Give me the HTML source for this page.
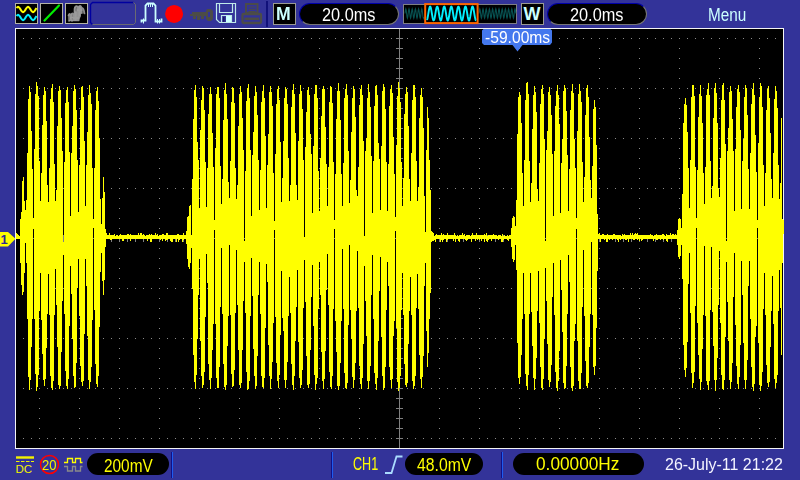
<!DOCTYPE html>
<html><head><meta charset="utf-8"><title>Oscilloscope</title>
<style>
html,body{margin:0;padding:0;}
body{width:800px;height:480px;overflow:hidden;background:#333399;font-family:"Liberation Sans",sans-serif;position:relative;}
.abs{position:absolute;}
.pill{position:absolute;background:#000;border-radius:11px;box-sizing:border-box;height:22px;}
.pill.top{border:1px solid;border-color:#0000a8 #777 #777 #0000a8;}
.txt{position:absolute;white-space:nowrap;line-height:1;transform-origin:0 0;}
.box{position:absolute;box-sizing:border-box;background:#000;border:1px solid #b8b8a8;}
</style></head><body>
<svg class="abs" style="left:0;top:0" width="800" height="480" viewBox="0 0 800 480">
 <!-- plot area -->
 <rect x="15.5" y="28.5" width="768" height="420" fill="#000" stroke="#f4f4f4" stroke-width="1"/>
 <g shape-rendering="crispEdges">
  <path d="M23 38h1M31 38h1M39 38h1M47 38h1M55 38h1M63 38h1M71 38h1M79 38h1M87 38h1M95 38h1M103 38h1M111 38h1M119 38h1M127 38h1M135 38h1M143 38h1M151 38h1M159 38h1M167 38h1M175 38h1M183 38h1M191 38h1M199 38h1M207 38h1M215 38h1M223 38h1M231 38h1M239 38h1M247 38h1M255 38h1M263 38h1M271 38h1M279 38h1M287 38h1M295 38h1M303 38h1M311 38h1M319 38h1M327 38h1M335 38h1M343 38h1M351 38h1M359 38h1M367 38h1M375 38h1M383 38h1M391 38h1M399 38h1M407 38h1M415 38h1M423 38h1M431 38h1M439 38h1M447 38h1M455 38h1M463 38h1M471 38h1M479 38h1M487 38h1M495 38h1M503 38h1M511 38h1M519 38h1M527 38h1M535 38h1M543 38h1M551 38h1M559 38h1M567 38h1M575 38h1M583 38h1M591 38h1M599 38h1M607 38h1M615 38h1M623 38h1M631 38h1M639 38h1M647 38h1M655 38h1M663 38h1M671 38h1M679 38h1M687 38h1M695 38h1M703 38h1M711 38h1M719 38h1M727 38h1M735 38h1M743 38h1M751 38h1M759 38h1M767 38h1M775 38h1M23 88h1M31 88h1M39 88h1M47 88h1M55 88h1M63 88h1M71 88h1M79 88h1M87 88h1M95 88h1M103 88h1M111 88h1M119 88h1M127 88h1M135 88h1M143 88h1M151 88h1M159 88h1M167 88h1M175 88h1M183 88h1M191 88h1M199 88h1M207 88h1M215 88h1M223 88h1M231 88h1M239 88h1M247 88h1M255 88h1M263 88h1M271 88h1M279 88h1M287 88h1M295 88h1M303 88h1M311 88h1M319 88h1M327 88h1M335 88h1M343 88h1M351 88h1M359 88h1M367 88h1M375 88h1M383 88h1M391 88h1M399 88h1M407 88h1M415 88h1M423 88h1M431 88h1M439 88h1M447 88h1M455 88h1M463 88h1M471 88h1M479 88h1M487 88h1M495 88h1M503 88h1M511 88h1M519 88h1M527 88h1M535 88h1M543 88h1M551 88h1M559 88h1M567 88h1M575 88h1M583 88h1M591 88h1M599 88h1M607 88h1M615 88h1M623 88h1M631 88h1M639 88h1M647 88h1M655 88h1M663 88h1M671 88h1M679 88h1M687 88h1M695 88h1M703 88h1M711 88h1M719 88h1M727 88h1M735 88h1M743 88h1M751 88h1M759 88h1M767 88h1M775 88h1M23 138h1M31 138h1M39 138h1M47 138h1M55 138h1M63 138h1M71 138h1M79 138h1M87 138h1M95 138h1M103 138h1M111 138h1M119 138h1M127 138h1M135 138h1M143 138h1M151 138h1M159 138h1M167 138h1M175 138h1M183 138h1M191 138h1M199 138h1M207 138h1M215 138h1M223 138h1M231 138h1M239 138h1M247 138h1M255 138h1M263 138h1M271 138h1M279 138h1M287 138h1M295 138h1M303 138h1M311 138h1M319 138h1M327 138h1M335 138h1M343 138h1M351 138h1M359 138h1M367 138h1M375 138h1M383 138h1M391 138h1M399 138h1M407 138h1M415 138h1M423 138h1M431 138h1M439 138h1M447 138h1M455 138h1M463 138h1M471 138h1M479 138h1M487 138h1M495 138h1M503 138h1M511 138h1M519 138h1M527 138h1M535 138h1M543 138h1M551 138h1M559 138h1M567 138h1M575 138h1M583 138h1M591 138h1M599 138h1M607 138h1M615 138h1M623 138h1M631 138h1M639 138h1M647 138h1M655 138h1M663 138h1M671 138h1M679 138h1M687 138h1M695 138h1M703 138h1M711 138h1M719 138h1M727 138h1M735 138h1M743 138h1M751 138h1M759 138h1M767 138h1M775 138h1M23 188h1M31 188h1M39 188h1M47 188h1M55 188h1M63 188h1M71 188h1M79 188h1M87 188h1M95 188h1M103 188h1M111 188h1M119 188h1M127 188h1M135 188h1M143 188h1M151 188h1M159 188h1M167 188h1M175 188h1M183 188h1M191 188h1M199 188h1M207 188h1M215 188h1M223 188h1M231 188h1M239 188h1M247 188h1M255 188h1M263 188h1M271 188h1M279 188h1M287 188h1M295 188h1M303 188h1M311 188h1M319 188h1M327 188h1M335 188h1M343 188h1M351 188h1M359 188h1M367 188h1M375 188h1M383 188h1M391 188h1M399 188h1M407 188h1M415 188h1M423 188h1M431 188h1M439 188h1M447 188h1M455 188h1M463 188h1M471 188h1M479 188h1M487 188h1M495 188h1M503 188h1M511 188h1M519 188h1M527 188h1M535 188h1M543 188h1M551 188h1M559 188h1M567 188h1M575 188h1M583 188h1M591 188h1M599 188h1M607 188h1M615 188h1M623 188h1M631 188h1M639 188h1M647 188h1M655 188h1M663 188h1M671 188h1M679 188h1M687 188h1M695 188h1M703 188h1M711 188h1M719 188h1M727 188h1M735 188h1M743 188h1M751 188h1M759 188h1M767 188h1M775 188h1M23 238h1M31 238h1M39 238h1M47 238h1M55 238h1M63 238h1M71 238h1M79 238h1M87 238h1M95 238h1M103 238h1M111 238h1M119 238h1M127 238h1M135 238h1M143 238h1M151 238h1M159 238h1M167 238h1M175 238h1M183 238h1M191 238h1M199 238h1M207 238h1M215 238h1M223 238h1M231 238h1M239 238h1M247 238h1M255 238h1M263 238h1M271 238h1M279 238h1M287 238h1M295 238h1M303 238h1M311 238h1M319 238h1M327 238h1M335 238h1M343 238h1M351 238h1M359 238h1M367 238h1M375 238h1M383 238h1M391 238h1M399 238h1M407 238h1M415 238h1M423 238h1M431 238h1M439 238h1M447 238h1M455 238h1M463 238h1M471 238h1M479 238h1M487 238h1M495 238h1M503 238h1M511 238h1M519 238h1M527 238h1M535 238h1M543 238h1M551 238h1M559 238h1M567 238h1M575 238h1M583 238h1M591 238h1M599 238h1M607 238h1M615 238h1M623 238h1M631 238h1M639 238h1M647 238h1M655 238h1M663 238h1M671 238h1M679 238h1M687 238h1M695 238h1M703 238h1M711 238h1M719 238h1M727 238h1M735 238h1M743 238h1M751 238h1M759 238h1M767 238h1M775 238h1M23 288h1M31 288h1M39 288h1M47 288h1M55 288h1M63 288h1M71 288h1M79 288h1M87 288h1M95 288h1M103 288h1M111 288h1M119 288h1M127 288h1M135 288h1M143 288h1M151 288h1M159 288h1M167 288h1M175 288h1M183 288h1M191 288h1M199 288h1M207 288h1M215 288h1M223 288h1M231 288h1M239 288h1M247 288h1M255 288h1M263 288h1M271 288h1M279 288h1M287 288h1M295 288h1M303 288h1M311 288h1M319 288h1M327 288h1M335 288h1M343 288h1M351 288h1M359 288h1M367 288h1M375 288h1M383 288h1M391 288h1M399 288h1M407 288h1M415 288h1M423 288h1M431 288h1M439 288h1M447 288h1M455 288h1M463 288h1M471 288h1M479 288h1M487 288h1M495 288h1M503 288h1M511 288h1M519 288h1M527 288h1M535 288h1M543 288h1M551 288h1M559 288h1M567 288h1M575 288h1M583 288h1M591 288h1M599 288h1M607 288h1M615 288h1M623 288h1M631 288h1M639 288h1M647 288h1M655 288h1M663 288h1M671 288h1M679 288h1M687 288h1M695 288h1M703 288h1M711 288h1M719 288h1M727 288h1M735 288h1M743 288h1M751 288h1M759 288h1M767 288h1M775 288h1M23 338h1M31 338h1M39 338h1M47 338h1M55 338h1M63 338h1M71 338h1M79 338h1M87 338h1M95 338h1M103 338h1M111 338h1M119 338h1M127 338h1M135 338h1M143 338h1M151 338h1M159 338h1M167 338h1M175 338h1M183 338h1M191 338h1M199 338h1M207 338h1M215 338h1M223 338h1M231 338h1M239 338h1M247 338h1M255 338h1M263 338h1M271 338h1M279 338h1M287 338h1M295 338h1M303 338h1M311 338h1M319 338h1M327 338h1M335 338h1M343 338h1M351 338h1M359 338h1M367 338h1M375 338h1M383 338h1M391 338h1M399 338h1M407 338h1M415 338h1M423 338h1M431 338h1M439 338h1M447 338h1M455 338h1M463 338h1M471 338h1M479 338h1M487 338h1M495 338h1M503 338h1M511 338h1M519 338h1M527 338h1M535 338h1M543 338h1M551 338h1M559 338h1M567 338h1M575 338h1M583 338h1M591 338h1M599 338h1M607 338h1M615 338h1M623 338h1M631 338h1M639 338h1M647 338h1M655 338h1M663 338h1M671 338h1M679 338h1M687 338h1M695 338h1M703 338h1M711 338h1M719 338h1M727 338h1M735 338h1M743 338h1M751 338h1M759 338h1M767 338h1M775 338h1M23 388h1M31 388h1M39 388h1M47 388h1M55 388h1M63 388h1M71 388h1M79 388h1M87 388h1M95 388h1M103 388h1M111 388h1M119 388h1M127 388h1M135 388h1M143 388h1M151 388h1M159 388h1M167 388h1M175 388h1M183 388h1M191 388h1M199 388h1M207 388h1M215 388h1M223 388h1M231 388h1M239 388h1M247 388h1M255 388h1M263 388h1M271 388h1M279 388h1M287 388h1M295 388h1M303 388h1M311 388h1M319 388h1M327 388h1M335 388h1M343 388h1M351 388h1M359 388h1M367 388h1M375 388h1M383 388h1M391 388h1M399 388h1M407 388h1M415 388h1M423 388h1M431 388h1M439 388h1M447 388h1M455 388h1M463 388h1M471 388h1M479 388h1M487 388h1M495 388h1M503 388h1M511 388h1M519 388h1M527 388h1M535 388h1M543 388h1M551 388h1M559 388h1M567 388h1M575 388h1M583 388h1M591 388h1M599 388h1M607 388h1M615 388h1M623 388h1M631 388h1M639 388h1M647 388h1M655 388h1M663 388h1M671 388h1M679 388h1M687 388h1M695 388h1M703 388h1M711 388h1M719 388h1M727 388h1M735 388h1M743 388h1M751 388h1M759 388h1M767 388h1M775 388h1M23 438h1M31 438h1M39 438h1M47 438h1M55 438h1M63 438h1M71 438h1M79 438h1M87 438h1M95 438h1M103 438h1M111 438h1M119 438h1M127 438h1M135 438h1M143 438h1M151 438h1M159 438h1M167 438h1M175 438h1M183 438h1M191 438h1M199 438h1M207 438h1M215 438h1M223 438h1M231 438h1M239 438h1M247 438h1M255 438h1M263 438h1M271 438h1M279 438h1M287 438h1M295 438h1M303 438h1M311 438h1M319 438h1M327 438h1M335 438h1M343 438h1M351 438h1M359 438h1M367 438h1M375 438h1M383 438h1M391 438h1M399 438h1M407 438h1M415 438h1M423 438h1M431 438h1M439 438h1M447 438h1M455 438h1M463 438h1M471 438h1M479 438h1M487 438h1M495 438h1M503 438h1M511 438h1M519 438h1M527 438h1M535 438h1M543 438h1M551 438h1M559 438h1M567 438h1M575 438h1M583 438h1M591 438h1M599 438h1M607 438h1M615 438h1M623 438h1M631 438h1M639 438h1M647 438h1M655 438h1M663 438h1M671 438h1M679 438h1M687 438h1M695 438h1M703 438h1M711 438h1M719 438h1M727 438h1M735 438h1M743 438h1M751 438h1M759 438h1M767 438h1M775 438h1M39 48h1M39 58h1M39 68h1M39 78h1M39 98h1M39 108h1M39 118h1M39 128h1M39 148h1M39 158h1M39 168h1M39 178h1M39 198h1M39 208h1M39 218h1M39 228h1M39 248h1M39 258h1M39 268h1M39 278h1M39 298h1M39 308h1M39 318h1M39 328h1M39 348h1M39 358h1M39 368h1M39 378h1M39 398h1M39 408h1M39 418h1M39 428h1M79 48h1M79 58h1M79 68h1M79 78h1M79 98h1M79 108h1M79 118h1M79 128h1M79 148h1M79 158h1M79 168h1M79 178h1M79 198h1M79 208h1M79 218h1M79 228h1M79 248h1M79 258h1M79 268h1M79 278h1M79 298h1M79 308h1M79 318h1M79 328h1M79 348h1M79 358h1M79 368h1M79 378h1M79 398h1M79 408h1M79 418h1M79 428h1M119 48h1M119 58h1M119 68h1M119 78h1M119 98h1M119 108h1M119 118h1M119 128h1M119 148h1M119 158h1M119 168h1M119 178h1M119 198h1M119 208h1M119 218h1M119 228h1M119 248h1M119 258h1M119 268h1M119 278h1M119 298h1M119 308h1M119 318h1M119 328h1M119 348h1M119 358h1M119 368h1M119 378h1M119 398h1M119 408h1M119 418h1M119 428h1M159 48h1M159 58h1M159 68h1M159 78h1M159 98h1M159 108h1M159 118h1M159 128h1M159 148h1M159 158h1M159 168h1M159 178h1M159 198h1M159 208h1M159 218h1M159 228h1M159 248h1M159 258h1M159 268h1M159 278h1M159 298h1M159 308h1M159 318h1M159 328h1M159 348h1M159 358h1M159 368h1M159 378h1M159 398h1M159 408h1M159 418h1M159 428h1M199 48h1M199 58h1M199 68h1M199 78h1M199 98h1M199 108h1M199 118h1M199 128h1M199 148h1M199 158h1M199 168h1M199 178h1M199 198h1M199 208h1M199 218h1M199 228h1M199 248h1M199 258h1M199 268h1M199 278h1M199 298h1M199 308h1M199 318h1M199 328h1M199 348h1M199 358h1M199 368h1M199 378h1M199 398h1M199 408h1M199 418h1M199 428h1M239 48h1M239 58h1M239 68h1M239 78h1M239 98h1M239 108h1M239 118h1M239 128h1M239 148h1M239 158h1M239 168h1M239 178h1M239 198h1M239 208h1M239 218h1M239 228h1M239 248h1M239 258h1M239 268h1M239 278h1M239 298h1M239 308h1M239 318h1M239 328h1M239 348h1M239 358h1M239 368h1M239 378h1M239 398h1M239 408h1M239 418h1M239 428h1M279 48h1M279 58h1M279 68h1M279 78h1M279 98h1M279 108h1M279 118h1M279 128h1M279 148h1M279 158h1M279 168h1M279 178h1M279 198h1M279 208h1M279 218h1M279 228h1M279 248h1M279 258h1M279 268h1M279 278h1M279 298h1M279 308h1M279 318h1M279 328h1M279 348h1M279 358h1M279 368h1M279 378h1M279 398h1M279 408h1M279 418h1M279 428h1M319 48h1M319 58h1M319 68h1M319 78h1M319 98h1M319 108h1M319 118h1M319 128h1M319 148h1M319 158h1M319 168h1M319 178h1M319 198h1M319 208h1M319 218h1M319 228h1M319 248h1M319 258h1M319 268h1M319 278h1M319 298h1M319 308h1M319 318h1M319 328h1M319 348h1M319 358h1M319 368h1M319 378h1M319 398h1M319 408h1M319 418h1M319 428h1M359 48h1M359 58h1M359 68h1M359 78h1M359 98h1M359 108h1M359 118h1M359 128h1M359 148h1M359 158h1M359 168h1M359 178h1M359 198h1M359 208h1M359 218h1M359 228h1M359 248h1M359 258h1M359 268h1M359 278h1M359 298h1M359 308h1M359 318h1M359 328h1M359 348h1M359 358h1M359 368h1M359 378h1M359 398h1M359 408h1M359 418h1M359 428h1M399 48h1M399 58h1M399 68h1M399 78h1M399 98h1M399 108h1M399 118h1M399 128h1M399 148h1M399 158h1M399 168h1M399 178h1M399 198h1M399 208h1M399 218h1M399 228h1M399 248h1M399 258h1M399 268h1M399 278h1M399 298h1M399 308h1M399 318h1M399 328h1M399 348h1M399 358h1M399 368h1M399 378h1M399 398h1M399 408h1M399 418h1M399 428h1M439 48h1M439 58h1M439 68h1M439 78h1M439 98h1M439 108h1M439 118h1M439 128h1M439 148h1M439 158h1M439 168h1M439 178h1M439 198h1M439 208h1M439 218h1M439 228h1M439 248h1M439 258h1M439 268h1M439 278h1M439 298h1M439 308h1M439 318h1M439 328h1M439 348h1M439 358h1M439 368h1M439 378h1M439 398h1M439 408h1M439 418h1M439 428h1M479 48h1M479 58h1M479 68h1M479 78h1M479 98h1M479 108h1M479 118h1M479 128h1M479 148h1M479 158h1M479 168h1M479 178h1M479 198h1M479 208h1M479 218h1M479 228h1M479 248h1M479 258h1M479 268h1M479 278h1M479 298h1M479 308h1M479 318h1M479 328h1M479 348h1M479 358h1M479 368h1M479 378h1M479 398h1M479 408h1M479 418h1M479 428h1M519 48h1M519 58h1M519 68h1M519 78h1M519 98h1M519 108h1M519 118h1M519 128h1M519 148h1M519 158h1M519 168h1M519 178h1M519 198h1M519 208h1M519 218h1M519 228h1M519 248h1M519 258h1M519 268h1M519 278h1M519 298h1M519 308h1M519 318h1M519 328h1M519 348h1M519 358h1M519 368h1M519 378h1M519 398h1M519 408h1M519 418h1M519 428h1M559 48h1M559 58h1M559 68h1M559 78h1M559 98h1M559 108h1M559 118h1M559 128h1M559 148h1M559 158h1M559 168h1M559 178h1M559 198h1M559 208h1M559 218h1M559 228h1M559 248h1M559 258h1M559 268h1M559 278h1M559 298h1M559 308h1M559 318h1M559 328h1M559 348h1M559 358h1M559 368h1M559 378h1M559 398h1M559 408h1M559 418h1M559 428h1M599 48h1M599 58h1M599 68h1M599 78h1M599 98h1M599 108h1M599 118h1M599 128h1M599 148h1M599 158h1M599 168h1M599 178h1M599 198h1M599 208h1M599 218h1M599 228h1M599 248h1M599 258h1M599 268h1M599 278h1M599 298h1M599 308h1M599 318h1M599 328h1M599 348h1M599 358h1M599 368h1M599 378h1M599 398h1M599 408h1M599 418h1M599 428h1M639 48h1M639 58h1M639 68h1M639 78h1M639 98h1M639 108h1M639 118h1M639 128h1M639 148h1M639 158h1M639 168h1M639 178h1M639 198h1M639 208h1M639 218h1M639 228h1M639 248h1M639 258h1M639 268h1M639 278h1M639 298h1M639 308h1M639 318h1M639 328h1M639 348h1M639 358h1M639 368h1M639 378h1M639 398h1M639 408h1M639 418h1M639 428h1M679 48h1M679 58h1M679 68h1M679 78h1M679 98h1M679 108h1M679 118h1M679 128h1M679 148h1M679 158h1M679 168h1M679 178h1M679 198h1M679 208h1M679 218h1M679 228h1M679 248h1M679 258h1M679 268h1M679 278h1M679 298h1M679 308h1M679 318h1M679 328h1M679 348h1M679 358h1M679 368h1M679 378h1M679 398h1M679 408h1M679 418h1M679 428h1M719 48h1M719 58h1M719 68h1M719 78h1M719 98h1M719 108h1M719 118h1M719 128h1M719 148h1M719 158h1M719 168h1M719 178h1M719 198h1M719 208h1M719 218h1M719 228h1M719 248h1M719 258h1M719 268h1M719 278h1M719 298h1M719 308h1M719 318h1M719 328h1M719 348h1M719 358h1M719 368h1M719 378h1M719 398h1M719 408h1M719 418h1M719 428h1M759 48h1M759 58h1M759 68h1M759 78h1M759 98h1M759 108h1M759 118h1M759 128h1M759 148h1M759 158h1M759 168h1M759 178h1M759 198h1M759 208h1M759 218h1M759 228h1M759 248h1M759 258h1M759 268h1M759 278h1M759 298h1M759 308h1M759 318h1M759 328h1M759 348h1M759 358h1M759 368h1M759 378h1M759 398h1M759 408h1M759 418h1M759 428h1" stroke="#8a8a8a" stroke-width="1" transform="translate(0,0.5)" fill="none"/>
  <path d="M399.5 29V448M16 238.5H783M396 38.5h7M396 48.5h7M396 58.5h7M396 68.5h7M396 78.5h7M396 88.5h7M396 98.5h7M396 108.5h7M396 118.5h7M396 128.5h7M396 138.5h7M396 148.5h7M396 158.5h7M396 168.5h7M396 178.5h7M396 188.5h7M396 198.5h7M396 208.5h7M396 218.5h7M396 228.5h7M396 238.5h7M396 248.5h7M396 258.5h7M396 268.5h7M396 278.5h7M396 288.5h7M396 298.5h7M396 308.5h7M396 318.5h7M396 328.5h7M396 338.5h7M396 348.5h7M396 358.5h7M396 368.5h7M396 378.5h7M396 388.5h7M396 398.5h7M396 408.5h7M396 418.5h7M396 428.5h7M396 438.5h7M23.5 235v7M31.5 235v7M39.5 235v7M47.5 235v7M55.5 235v7M63.5 235v7M71.5 235v7M79.5 235v7M87.5 235v7M95.5 235v7M103.5 235v7M111.5 235v7M119.5 235v7M127.5 235v7M135.5 235v7M143.5 235v7M151.5 235v7M159.5 235v7M167.5 235v7M175.5 235v7M183.5 235v7M191.5 235v7M199.5 235v7M207.5 235v7M215.5 235v7M223.5 235v7M231.5 235v7M239.5 235v7M247.5 235v7M255.5 235v7M263.5 235v7M271.5 235v7M279.5 235v7M287.5 235v7M295.5 235v7M303.5 235v7M311.5 235v7M319.5 235v7M327.5 235v7M335.5 235v7M343.5 235v7M351.5 235v7M359.5 235v7M367.5 235v7M375.5 235v7M383.5 235v7M391.5 235v7M399.5 235v7M407.5 235v7M415.5 235v7M423.5 235v7M431.5 235v7M439.5 235v7M447.5 235v7M455.5 235v7M463.5 235v7M471.5 235v7M479.5 235v7M487.5 235v7M495.5 235v7M503.5 235v7M511.5 235v7M519.5 235v7M527.5 235v7M535.5 235v7M543.5 235v7M551.5 235v7M559.5 235v7M567.5 235v7M575.5 235v7M583.5 235v7M591.5 235v7M599.5 235v7M607.5 235v7M615.5 235v7M623.5 235v7M631.5 235v7M639.5 235v7M647.5 235v7M655.5 235v7M663.5 235v7M671.5 235v7M679.5 235v7M687.5 235v7M695.5 235v7M703.5 235v7M711.5 235v7M719.5 235v7M727.5 235v7M735.5 235v7M743.5 235v7M751.5 235v7M759.5 235v7M767.5 235v7M775.5 235v7" stroke="#808080" stroke-width="1" fill="none"/>
  <path d="M16 233v6M17 234v5M18 235v4M19 236v3M20 219v44M21 212v73M22 181v114M23 177v115M24 201v72M25 210v33M26 200v63M27 153v166M28 99v278M29 86v304M30 92v288M31 131v216M32 169v150M33 218v11M34 149v170M35 94v280M36 82v309M37 86v301M38 96v279M39 161v150M40 201v72M41 173v147M42 125v229M43 95v285M44 87v299M45 91v288M46 121v227M47 185v129M48 202v72M49 168v147M50 99v277M51 88v300M52 84v306M53 102v279M54 164v151M55 201v68M56 190v115M57 126v221M58 91v294M59 86v303M60 90v296M61 118v234M62 151v150M63 242v13M64 162v152M65 103v268M66 90v296M67 87v302M68 102v277M69 152v174M70 216v50M71 153v141M72 126v213M73 91v285M74 85v303M75 89v298M76 110v253M77 160v128M78 212v47M79 165v151M80 110v256M81 87v295M82 86v300M83 97v284M84 141v193M85 206v53M86 165v121M87 132v204M88 95v285M89 85v304M90 93v289M91 104v263M92 168v152M93 219v9M94 168v142M95 110v254M96 91v293M97 87v300M98 101v275M99 138v189M100 199v73M101 224v29M102 198v83M103 177v118M104 192v88M105 229v18M106 233v6M107 235v4M108 235v4M109 233v6M110 235v5M111 235v5M112 235v4M113 235v4M114 234v5M115 236v3M116 235v4M117 235v4M118 236v3M119 235v4M120 234v5M121 235v4M122 235v6M123 235v6M124 235v4M125 235v4M126 235v4M127 234v5M128 234v5M129 235v4M130 234v7M131 235v4M132 235v4M133 235v4M134 235v4M135 235v4M136 235v4M137 235v4M138 233v6M139 235v4M140 233v6M141 233v6M142 235v4M143 234v5M144 235v4M145 236v3M146 235v4M147 235v6M148 235v4M149 234v5M150 235v7M151 234v8M152 235v4M153 235v4M154 235v4M155 233v6M156 235v4M157 234v5M158 236v3M159 235v4M160 235v5M161 235v4M162 234v7M163 234v5M164 235v4M165 235v6M166 233v7M167 233v7M168 235v4M169 235v4M170 235v6M171 235v7M172 235v7M173 235v4M174 235v4M175 235v4M176 235v7M177 234v5M178 234v8M179 235v5M180 235v4M181 235v4M182 235v7M183 233v7M184 235v4M185 235v4M186 231v13M187 217v42M188 216v51M189 206v63M190 205v58M191 235v13M192 179v110M193 119v236M194 90v292M195 85v304M196 97v278M197 142v197M198 160v135M199 208v51M200 130v211M201 100v276M202 86v302M203 88v297M204 110v262M205 162v155M206 207v47M207 168v115M208 114v250M209 94v286M210 87v302M211 94v284M212 133v217M213 167v157M214 220v10M215 148v176M216 94v284M217 87v301M218 87v301M219 98v269M220 166v141M221 204v44M222 179v135M223 120v244M224 90v297M225 83v307M226 94v291M227 119v227M228 182v134M229 198v47M230 161v154M231 102v272M232 87v300M233 88v298M234 103v267M235 168v145M236 199v51M237 185v120M238 126v224M239 94v291M240 86v302M241 92v291M242 118v232M243 150v151M244 241v21M245 171v142M246 101v271M247 88v302M248 84v305M249 98v283M250 150v166M251 216v42M252 155v141M253 132v217M254 96v280M255 86v303M256 92v294M257 115v241M258 160v135M259 210v52M260 170v144M261 102v274M262 91v296M263 85v303M264 98v280M265 136v192M266 208v56M267 165v117M268 134v211M269 92v284M270 86v303M271 92v287M272 106v256M273 173v150M274 221v9M275 154v163M276 104v259M277 89v292M278 86v302M279 100v275M280 142v193M281 202v69M282 178v140M283 141v190M284 98v282M285 87v301M286 89v291M287 104v258M288 158v158M289 201v76M290 185v128M291 107v257M292 90v295M293 84v306M294 94v282M295 133v208M296 185v122M297 200v70M298 141v201M299 94v284M300 85v303M301 91v294M302 109v261M303 160v148M304 237v23M305 147v155M306 112v244M307 90v295M308 87v301M309 95v289M310 134v216M311 154v143M312 213v52M313 146v180M314 94v281M315 85v305M316 85v299M317 98v280M318 171v138M319 211v51M320 158v137M321 116v236M322 89v292M323 86v303M324 89v290M325 127v224M326 164v126M327 206v48M328 167v138M329 102v270M330 86v301M331 87v302M332 103v273M333 162v147M334 220v9M335 174v147M336 119v233M337 91v295M338 83v307M339 91v295M340 120v243M341 174v147M342 206v43M343 163v146M344 98v275M345 89v299M346 84v305M347 95v288M348 151v174M349 203v42M350 180v130M351 132v207M352 98v279M353 86v302M354 89v291M355 117v246M356 190v121M357 196v55M358 167v141M359 105v261M360 89v295M361 85v304M362 95v283M363 141v203M364 236v30M365 151v150M366 138v198M367 98v283M368 84v305M369 92v289M370 107v259M371 156v139M372 213v42M373 161v158M374 106v267M375 86v298M376 85v305M377 95v283M378 143v198M379 159v132M380 210v47M381 146v191M382 91v285M383 84v306M384 87v301M385 109v258M386 162v148M387 211v51M388 164v122M389 106v261M390 89v291M391 85v303M392 93v286M393 137v199M394 174v147M395 217v14M396 145v183M397 96v286M398 82v309M399 88v300M400 102v274M401 162v148M402 206v67M403 178v137M404 114v250M405 94v291M406 87v300M407 92v291M408 126v218M409 179v132M410 201v76M411 153v162M412 100v281M413 85v304M414 85v301M415 97v279M416 161v147M417 201v73M418 187v122M419 118v237M420 95v284M421 88v300M422 97v280M423 128v228M424 196v90M425 232v31M426 150v181M427 107v260M428 118v235M429 160v159M430 190v103M431 231v11M432 232v9M433 233v8M434 236v4M435 235v7M436 234v5M437 235v4M438 235v4M439 235v4M440 235v7M441 233v7M442 235v7M443 234v6M444 235v4M445 235v4M446 235v7M447 233v7M448 235v4M449 235v4M450 235v4M451 235v4M452 235v4M453 235v6M454 233v6M455 235v7M456 236v3M457 235v4M458 236v5M459 235v7M460 235v4M461 235v4M462 233v6M463 235v4M464 234v5M465 236v4M466 235v6M467 235v5M468 235v4M469 235v4M470 236v3M471 235v7M472 233v6M473 235v4M474 235v4M475 235v6M476 233v6M477 235v5M478 235v4M479 235v5M480 235v4M481 235v6M482 235v4M483 235v4M484 234v8M485 235v4M486 233v8M487 236v6M488 235v5M489 235v4M490 235v4M491 235v6M492 235v4M493 234v5M494 235v4M495 235v4M496 235v4M497 236v3M498 235v5M499 235v4M500 235v4M501 236v6M502 234v8M503 236v4M504 235v4M505 236v3M506 236v3M507 235v5M508 236v5M509 235v4M510 235v4M511 228v19M512 218v41M513 216v46M514 217v43M515 226v19M516 200v70M517 134v209M518 97v281M519 92v292M520 95v282M521 123v232M522 173v146M523 206v67M524 160v154M525 100v274M526 83v303M527 82v308M528 94v281M529 161v153M530 202v71M531 183v129M532 129v217M533 95v283M534 86v304M535 92v287M536 112v246M537 189v122M538 201v70M539 163v160M540 104v263M541 89v299M542 85v305M543 94v285M544 139v200M545 241v27M546 150v151M547 131v213M548 92v288M549 87v300M550 95v287M551 115v250M552 154v143M553 216v47M554 151v164M555 106v266M556 91v297M557 85v306M558 95v286M559 124v227M560 213v47M561 163v127M562 139v193M563 91v292M564 85v304M565 88v300M566 111v255M567 155v159M568 211v44M569 169v113M570 110v257M571 91v297M572 84v307M573 93v293M574 139v202M575 168v156M576 218v11M577 131v210M578 94v287M579 84v305M580 91v298M581 102v271M582 162v145M583 202v48M584 177v139M585 115v246M586 88v298M587 85v303M588 97v286M589 137v210M590 180v134M591 198v44M592 166v149M593 109v258M594 100v275M595 107v259M596 145v183M597 214v57M598 234v5M599 233v6M600 235v7M601 235v4M602 234v5M603 234v5M604 235v5M605 235v4M606 235v7M607 234v8M608 235v4M609 235v5M610 235v4M611 235v4M612 235v5M613 234v5M614 234v5M615 235v4M616 235v4M617 235v5M618 235v7M619 235v4M620 235v5M621 236v3M622 234v5M623 235v4M624 234v5M625 235v5M626 235v5M627 235v4M628 235v7M629 235v4M630 233v6M631 235v4M632 233v6M633 235v5M634 234v6M635 233v6M636 234v5M637 233v7M638 235v4M639 235v6M640 235v4M641 235v6M642 235v5M643 235v4M644 235v4M645 235v4M646 235v4M647 235v4M648 235v4M649 235v4M650 234v5M651 235v4M652 235v4M653 236v5M654 235v4M655 235v4M656 234v6M657 235v5M658 235v4M659 235v4M660 235v5M661 235v4M662 234v5M663 234v6M664 235v4M665 236v3M666 234v7M667 235v7M668 235v4M669 235v4M670 233v6M671 235v4M672 234v5M673 234v5M674 235v4M675 234v5M676 235v4M677 230v15M678 219v38M679 218v41M680 219v37M681 228v17M682 194v85M683 123v222M684 104v266M685 98v279M686 105v263M687 132v210M688 168v116M689 208v45M690 160v153M691 97v276M692 85v303M693 85v298M694 96v276M695 167v139M696 218v10M697 170v153M698 117v238M699 94v285M700 85v305M701 96v286M702 123v226M703 173v142M704 204v42M705 167v149M706 95v286M707 89v296M708 83v307M709 95v286M710 161v149M711 198v49M712 186v126M713 118v228M714 88v292M715 83v308M716 93v287M717 123v235M718 188v117M719 197v54M720 158v165M721 100v275M722 85v304M723 83v307M724 100v280M725 144v193M726 241v21M727 151v151M728 128v213M729 92v288M730 86v303M731 91v291M732 119v244M733 151v146M734 211v42M735 149v176M736 107v259M737 89v295M738 85v304M739 92v285M740 130v215M741 209v52M742 161v134M743 139v204M744 97v283M745 85v304M746 88v292M747 115v245M748 169v117M749 209v52M750 153v166M751 104v263M752 89v298M753 83v308M754 95v289M755 135v202M756 172v154M757 220v8M758 143v200M759 97v288M760 83v308M761 86v300M762 107v265M763 165v144M764 206v67M765 173v142M766 110v255M767 89v294M768 86v301M769 98v284M770 133v214M771 179v132M772 198v78M773 153v171M774 99v280M775 86v302M776 91v292M777 108v267M778 165v146M779 199v71M780 183v125M781 118v237M782 219v44M783 220v14" stroke="#ffff00" stroke-width="1" transform="translate(0.5,0)" fill="none"/>
 </g>
 <!-- channel marker -->
 <path d="M0 232H8L15.5 238.7L8 246.5H0Z" fill="#ffff00"/>
 <!-- trigger position label -->
 <path d="M483.5 29H550.5L552 30.5V42.5L550 45H522.5L517.5 51.5L512.5 45H484L482 43V30.5Z" fill="#4478ee"/>

 <!-- top toolbar icons -->
 <g>
  <rect x="15.5" y="3.5" width="22" height="20" fill="#000" stroke="#b4b4a6"/>
  <path d="M16.5 8.0L17.0 7.4L17.5 7.1L18.0 6.9L18.5 7.0L19.0 7.4L19.5 7.9L20.0 8.6L20.5 9.4L21.0 10.2L21.5 11.0L22.0 11.6L22.5 11.9L23.0 12.1L23.5 12.0L24.0 11.6L24.5 11.1L25.0 10.4L25.5 9.6L26.0 8.8L26.5 8.0L27.0 7.4L27.5 7.1L28.0 6.9L28.5 7.0L29.0 7.4L29.5 7.9L30.0 8.6L30.5 9.4L31.0 10.2L31.5 11.0L32.0 11.6L32.5 11.9L33.0 12.1L33.5 12.0L34.0 11.6L34.5 11.1L35.0 10.4L35.5 9.6L36.0 8.8L36.5 8.0" stroke="#ffff00" stroke-width="2" fill="none"/>
  <path d="M16.5 16.0L17.0 15.4L17.5 15.1L18.0 14.9L18.5 15.0L19.0 15.4L19.5 15.9L20.0 16.6L20.5 17.4L21.0 18.2L21.5 19.0L22.0 19.6L22.5 19.9L23.0 20.1L23.5 20.0L24.0 19.6L24.5 19.1L25.0 18.4L25.5 17.6L26.0 16.8L26.5 16.0L27.0 15.4L27.5 15.1L28.0 14.9L28.5 15.0L29.0 15.4L29.5 15.9L30.0 16.6L30.5 17.4L31.0 18.2L31.5 19.0L32.0 19.6L32.5 19.9L33.0 20.1L33.5 20.0L34.0 19.6L34.5 19.1L35.0 18.4L35.5 17.6L36.0 16.8L36.5 16.0" stroke="#00eeff" stroke-width="2" fill="none"/>
  <rect x="40.5" y="3.5" width="22" height="20" fill="#000" stroke="#b4b4a6"/>
  <path d="M44.5 20.5L59 5.5" stroke="#00ee00" stroke-width="2.2" stroke-linecap="round"/>
  <rect x="65.5" y="3.5" width="22" height="20" fill="#000" stroke="#b4b4a6"/>
  <g filter="url(#bl)" fill="none" stroke="#b0b0b0" stroke-linecap="round">
   <path d="M68.500 15.500C69 13.500 70 13.500 70.500 15V20.500M71 20.500V14.500C72 13 73 13 73.500 14.500V20.500M74.500 20.500V9C75 6 76.500 5.500 77.500 7V20M78.500 20V7.500C79.500 5 81 5.500 81.500 8V13M82.500 8C83.500 8 84 10 84.500 13.500M76 20.500V12M80 16V7M69.500 20.500H78.500M72.500 17.500H79" stroke-width="1.700" opacity=".8"/>
   <path d="M69 21V16M72 21V15M75.500 20V8M79.500 17V7M70 18H79M76 10H82" stroke-width="2.200" opacity=".45"/>
   <path d="M68 14H74V7L77 5.500L82 6.500L84 10V13.500L81 14L79.500 21H68.500Z" fill="#9a9a9a" stroke="none" opacity=".5"/>
  </g>
  <defs><filter id="bl" x="-20%" y="-20%" width="140%" height="140%"><feGaussianBlur stdDeviation="0.6"/></filter></defs>
  <!-- empty bevel box -->
  <path d="M92.500 24.500L90.500 22.500V4.500L92.500 2.500H133.500" fill="none" stroke="#0000a0" stroke-width="1.4"/>
  <path d="M133.500 2.500L135.500 4.500V22.500L133.500 24.500H92.500" fill="none" stroke="#6a6a72" stroke-width="1"/>
  <!-- pulse icon -->
  <path d="M141.500 22.500V20.500H145.500V5.500L147.500 3.500H153.500L155.500 5.500V21.500H161.500V18.500" fill="none" stroke="#ccffff" stroke-width="1.8"/>
  <path d="M143.500 18.500V23.500M148.500 3V7M150.500 3V7M152.500 3V7M157.500 19V23.500M159.500 19V23.500" stroke="#ccffff" stroke-width="1" fill="none"/>
  <!-- record -->
  <circle cx="174.1" cy="13.9" r="9" fill="#ff0000"/>
  <!-- key -->
  <g fill="#4c4c48">
   <path d="M190 14H192V12H206V16H204V19H201V16H200V20H197V16H196V19H193V16H190Z"/>
   <path d="M207 9H211L213 11V19L211 21H208L206 19V11ZM208 12V17H210V12Z" fill-rule="evenodd"/>
  </g>
  <!-- floppy -->
  <g fill="none" stroke="#bfeaea" stroke-width="1.2">
   <path d="M216.500 3.500H235.500V22.500H219.500L216.500 19.500Z"/>
   <path d="M219.500 3.500V12.500H232.500V3.500"/>
   <path d="M221.500 22.500V15.500H231.500V22.500"/>
  </g>
  <rect x="226" y="16" width="5" height="6" fill="#ccffff"/>
  <rect x="223" y="17" width="1.500" height="5" fill="#1a1a66"/>
  <!-- printer -->
  <g fill="none" stroke="#4c4c48">
   <rect x="246" y="4" width="11.500" height="9" stroke-width="1.900"/>
   <path d="M248.500 7H255.500M248.500 9.300H255.500M248.500 11.500H255.500" stroke-width="1"/>
   <rect x="242.500" y="14" width="18.500" height="9" stroke-width="2.300" rx="1"/>
  </g>
  <rect x="244.500" y="17.500" width="14.500" height="2.600" fill="#4c4c48"/>
  <!-- separator -->
  <rect x="266" y="1" width="2" height="26" fill="#11117a"/>
  <!-- overview window -->
  <rect x="403.500" y="4.500" width="113" height="19" fill="#000" stroke="#7e7e86"/>
  <path d="M405.0 13.5L405.4 10.2L405.8 8.9L406.2 10.2L406.6 13.5L407.0 16.8L407.4 18.1L407.8 16.8L408.2 13.5L408.6 10.2L409.0 8.9L409.4 10.2L409.8 13.5L410.2 16.8L410.6 18.1L411.0 16.8L411.4 13.5L411.8 10.2L412.2 8.9L412.6 10.2L413.0 13.5L413.4 16.8L413.8 18.1L414.2 16.8L414.6 13.5L415.0 10.2L415.4 8.9L415.8 10.2L416.2 13.5L416.6 16.8L417.0 18.1L417.4 16.8L417.8 13.5L418.2 10.2L418.6 8.9L419.0 10.2L419.4 13.5L419.8 16.8L420.2 18.1L420.6 16.8L421.0 13.5L421.4 10.2L421.8 8.9L422.2 10.2L422.6 13.5L423.0 16.8L423.4 18.1L423.8 16.8" stroke="#075050" stroke-width="1.1" fill="none"/>
  <path d="M479.0 13.5L479.4 10.2L479.8 8.9L480.2 10.2L480.6 13.5L481.0 16.8L481.4 18.1L481.8 16.8L482.2 13.5L482.6 10.2L483.0 8.9L483.4 10.2L483.8 13.5L484.2 16.8L484.6 18.1L485.0 16.8L485.4 13.5L485.8 10.2L486.2 8.9L486.6 10.2L487.0 13.5L487.4 16.8L487.8 18.1L488.2 16.8L488.6 13.5L489.0 10.2L489.4 8.9L489.8 10.2L490.2 13.5L490.6 16.8L491.0 18.1L491.4 16.8L491.8 13.5L492.2 10.2L492.6 8.9L493.0 10.2L493.4 13.5L493.8 16.8L494.2 18.1L494.6 16.8L495.0 13.5L495.4 10.2L495.8 8.9L496.2 10.2L496.6 13.5L497.0 16.8L497.4 18.1L497.8 16.8L498.2 13.5L498.6 10.2L499.0 8.9L499.4 10.2L499.8 13.5L500.2 16.8L500.6 18.1L501.0 16.8L501.4 13.5L501.8 10.2L502.2 8.9L502.6 10.2L503.0 13.5L503.4 16.8L503.8 18.1L504.2 16.8L504.6 13.5L505.0 10.2L505.4 8.9L505.8 10.2L506.2 13.5L506.6 16.8L507.0 18.1L507.4 16.8L507.8 13.5L508.2 10.2L508.6 8.9L509.0 10.2L509.4 13.5L509.8 16.8L510.2 18.1L510.6 16.8L511.0 13.5L511.4 10.2L511.8 8.9L512.2 10.2L512.6 13.5L513.0 16.8L513.4 18.1L513.8 16.8L514.2 13.5L514.6 10.2L515.0 8.9L515.4 10.2L515.8 13.5" stroke="#075050" stroke-width="1.1" fill="none"/>
  <rect x="425.200" y="4.100" width="52.400" height="19" fill="#000" stroke="#ff6600" stroke-width="2"/>
  <path d="M427.0 20.0L427.4 18.7L427.8 16.8L428.2 14.4L428.6 12.0L429.0 9.7L429.4 7.9L429.8 6.8L430.2 6.5L430.6 7.1L431.0 8.5L431.4 10.6L431.8 13.0L432.2 15.4L432.6 17.7L433.0 19.4L433.4 20.3L433.8 20.4L434.2 19.7L434.6 18.2L435.0 16.1L435.4 13.6L435.8 11.2L436.2 9.0L436.6 7.4L437.0 6.6L437.4 6.6L437.8 7.5L438.2 9.1L438.6 11.3L439.0 13.8L439.4 16.2L439.8 18.3L440.2 19.8L440.6 20.5L441.0 20.3L441.4 19.3L441.8 17.5L442.2 15.3L442.6 12.8L443.0 10.4L443.4 8.4L443.8 7.1L444.2 6.5L444.6 6.8L445.0 8.0L445.4 9.8L445.8 12.1L446.2 14.6L446.6 16.9L447.0 18.8L447.4 20.1L447.8 20.5L448.2 20.0L448.6 18.8L449.0 16.8L449.4 14.5L449.8 12.0L450.2 9.7L450.6 7.9L451.0 6.8L451.4 6.5L451.8 7.1L452.2 8.5L452.6 10.5L453.0 12.9L453.4 15.4L453.8 17.6L454.2 19.3L454.6 20.3L455.0 20.4L455.4 19.7L455.8 18.2L456.2 16.1L456.6 13.7L457.0 11.2L457.4 9.1L457.8 7.5L458.2 6.6L458.6 6.6L459.0 7.5L459.4 9.1L459.8 11.3L460.2 13.7L460.6 16.1L461.0 18.2L461.4 19.7L461.8 20.5L462.2 20.3L462.6 19.3L463.0 17.6L463.4 15.3L463.8 12.9L464.2 10.5L464.6 8.5L465.0 7.1L465.4 6.5L465.8 6.8L466.2 7.9L466.6 9.8L467.0 12.0L467.4 14.5L467.8 16.9L468.2 18.8L468.6 20.1L469.0 20.5L469.4 20.1L469.8 18.8L470.2 16.9L470.6 14.6L471.0 12.1L471.4 9.8L471.8 8.0L472.2 6.8L472.6 6.5L473.0 7.1L473.4 8.5L473.8 10.5L474.2 12.8L474.6 15.3L475.0 17.6L475.4 19.3L475.8 20.3L476.2 20.5" stroke="#00f0ff" stroke-width="1.900" fill="none" stroke-linejoin="round"/>
 </g>

 <!-- bottom bar icons -->
 <g>
  <rect x="16" y="456.300" width="18" height="2.400" fill="#f2f200"/>
  <path d="M16 461.500H19.500M21 461.500H24.500M26 461.500H29.500M31 461.500H34" stroke="#f2f200" stroke-width="1.200"/>
  <circle cx="49.500" cy="464.500" r="9" fill="none" stroke="#ff0000" stroke-width="1.500"/>
  <path d="M64 462.500H67.500V458.500H72.500V462.500H75.500V458.500H80.500V462.500H82.500" fill="none" stroke="#ffff00" stroke-width="1.300"/>
  <path d="M64 466.500H67.500V471H72.500V466.500H75.500V471H80.500V466.500H82.500" fill="none" stroke="#8a8a8a" stroke-width="1.300"/>
  <rect x="171" y="452" width="1" height="26" fill="#101088"/>
  <rect x="172" y="452" width="1" height="26" fill="#1e5cf0"/>
  <rect x="331" y="452" width="1" height="26" fill="#101088"/>
  <rect x="332" y="452" width="1" height="26" fill="#1e5cf0"/>
  <rect x="501" y="452" width="1" height="26" fill="#101088"/>
  <rect x="502" y="452" width="1" height="26" fill="#1e5cf0"/>
  <path d="M385 473H391.500L396.500 456.500H402.500" fill="none" stroke="#aadcff" stroke-width="1.800"/>
 </g>
</svg>

<!-- top toolbar widgets -->
<div class="box" style="left:273px;top:3px;width:23px;height:22px;border-color:#9a9a92"></div>
<div class="txt" style="left:276px;top:5px;font-size:18px;font-weight:bold;color:#ccffff;transform:scaleX(.98)">M</div>
<div class="pill top" style="left:299px;top:3px;width:100px"></div>
<div class="txt" style="left:321.500px;top:6px;font-size:18px;color:#fff;transform:scaleX(.905)">20.0ms</div>
<div class="box" style="left:521px;top:3px;width:23px;height:22px;border-color:#9a9a92"></div>
<div class="txt" style="left:523.500px;top:5px;font-size:18px;font-weight:bold;color:#ccffff;transform:scaleX(1.0)">W</div>
<div class="pill top" style="left:547px;top:3px;width:100px"></div>
<div class="txt" style="left:569.500px;top:6px;font-size:18px;color:#fff;transform:scaleX(.905)">20.0ms</div>
<div class="txt" style="left:708px;top:6px;font-size:18px;color:#ccffff;transform:scaleX(.85)">Menu</div>

<!-- trigger label text + channel marker text -->
<div class="txt" style="left:485px;top:28.500px;font-size:17px;color:#fff;transform:scaleX(.92)">-59.00ms</div>
<div class="txt" style="left:0.500px;top:232.500px;font-size:13px;font-weight:bold;color:#2a2a90;">1</div>

<!-- bottom bar -->
<div class="txt" style="left:15.500px;top:463.500px;font-size:11.5px;color:#f2f200;transform:scaleX(1.0)">DC</div>
<div class="txt" style="left:42px;top:457.500px;font-size:14.500px;color:#f2f200;transform:scaleX(.9)">20</div>
<div class="pill" style="left:87px;top:453px;width:82px"></div>
<div class="txt" style="left:103.500px;top:456.6px;font-size:18px;color:#ffff00;transform:scaleX(.855)">200mV</div>
<div class="txt" style="left:353px;top:455.500px;font-size:17.500px;color:#ffff00;transform:scaleX(.72)">CH1</div>
<div class="pill" style="left:405px;top:453px;width:78px"></div>
<div class="txt" style="left:416.500px;top:455.500px;font-size:18px;color:#ffff00;transform:scaleX(.875)">48.0mV</div>
<div class="pill" style="left:513px;top:453px;width:131px"></div>
<div class="txt" style="left:535.500px;top:455.500px;font-size:17.500px;color:#ffff00;transform:scaleX(.985)">0.00000Hz</div>
<div class="txt" style="left:664.500px;top:455.500px;font-size:17px;color:#f4f4ff;transform:scaleX(.94)">26-July-11 21:22</div>
</body></html>
